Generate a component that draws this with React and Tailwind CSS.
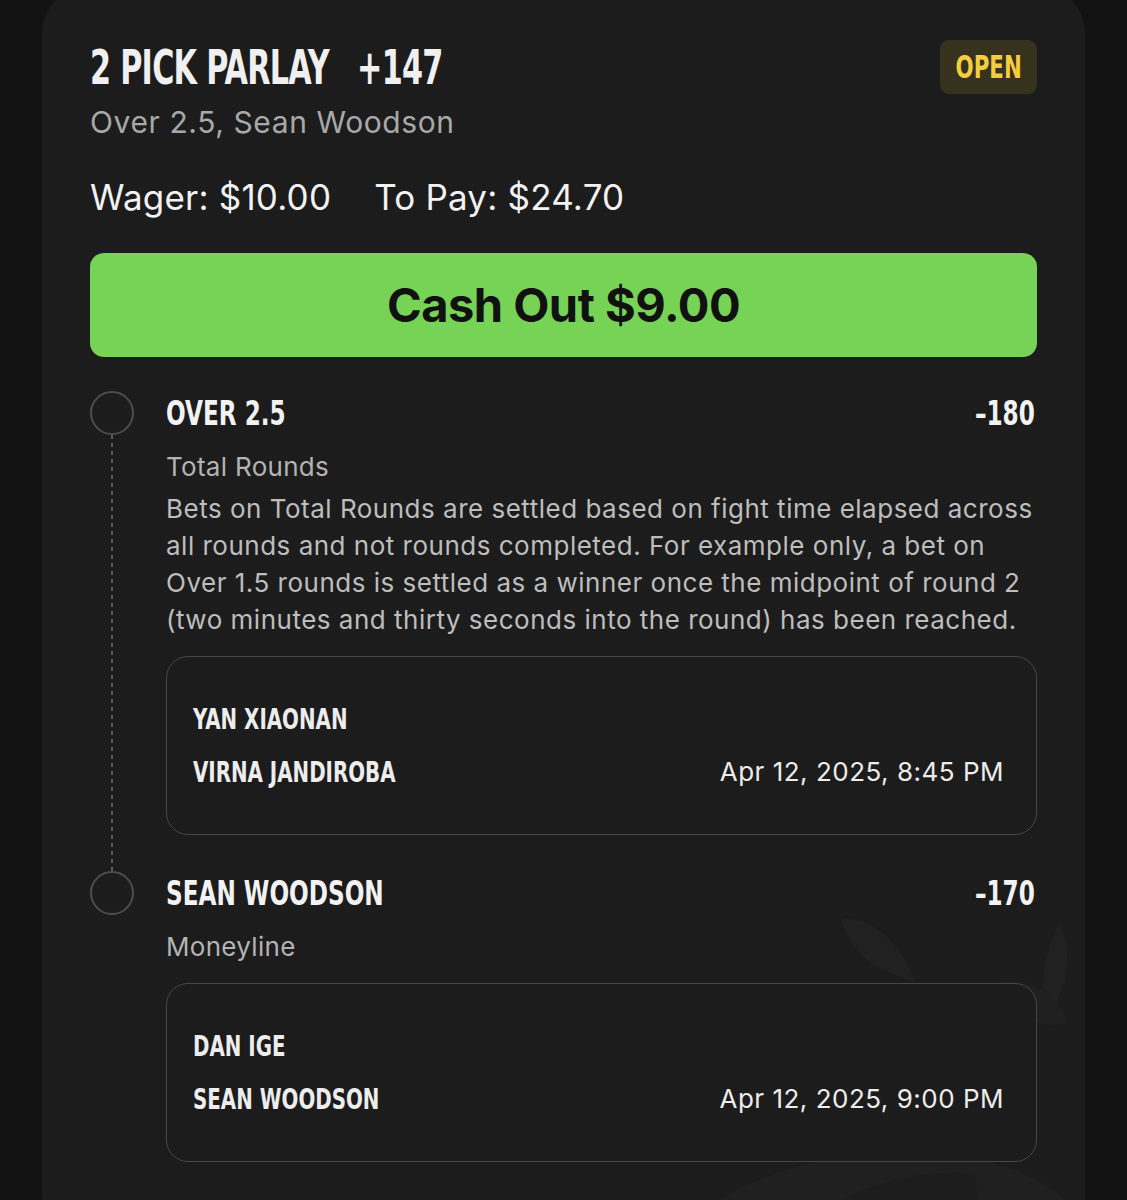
import React from 'react'

const cond = "font-['Liberation_Sans_Narrow','DejaVu_Sans_Condensed',sans-serif] font-bold"
const sans = "font-['Inter','Noto_Sans',sans-serif]"

const legs = [
  {
    pick: 'OVER 2.5',
    odds: '–180',
    market: 'Total Rounds',
    desc: 'Bets on Total Rounds are settled based on fight time elapsed across all rounds and not rounds completed. For example only, a bet on Over 1.5 rounds is settled as a winner once the midpoint of round 2 (two minutes and thirty seconds into the round) has been reached.',
    fighters: ['YAN XIAONAN', 'VIRNA JANDIROBA'],
    date: 'Apr 12, 2025, 8:45 PM',
  },
  {
    pick: 'SEAN WOODSON',
    odds: '–170',
    market: 'Moneyline',
    fighters: ['DAN IGE', 'SEAN WOODSON'],
    date: 'Apr 12, 2025, 9:00 PM',
  },
]

function Watermark() {
  return (
    <svg className="absolute right-0 bottom-0 z-0" width="420" height="330" viewBox="0 0 420 330" fill="none">
      <path d="M176 8 C 200 0, 238 30, 250 70 C 222 60, 190 52, 176 8 Z" fill="#212121" />
      <path d="M395 10 C 380 40, 372 70, 384 100 C 400 80, 410 50, 395 10 Z" fill="#212121" />
      <path d="M335 70 C 360 65, 395 80, 402 110 C 380 120, 350 105, 335 70 Z" fill="#202020" />
      <path d="M0 330 C 80 250, 200 230, 300 245 C 360 255, 400 280, 420 310 L 420 330 Z" fill="#202020" />
      <path d="M120 330 C 170 280, 240 255, 310 262 L 320 330 Z" fill="#1d1d1d" />
    </svg>
  )
}

function Leg({ leg, last }) {
  return (
    <div className="grid grid-cols-[76px_1fr]">
      <div className="flex flex-col items-start">
        <div className="w-[44px] h-[44px] rounded-full border-2 border-[#4d4d4d] shrink-0" />
        {!last && (
          <div className="ml-[21px] w-[2px] flex-1 bg-[repeating-linear-gradient(to_bottom,#5a5a5a_0_4px,transparent_4px_8px)]" />
        )}
      </div>
      <div className={last ? 'pb-[80px]' : 'pb-9'}>
        <div className="h-[44px] flex items-center justify-between">
          <span className={`${cond} inline-block origin-left scale-x-[0.78] text-[33px] leading-none text-[#f2f2f2]`}>{leg.pick}</span>
          <span className={`${cond} inline-block origin-right scale-x-[0.78] text-[33px] leading-none text-[#f2f2f2] mr-[2px]`}>{leg.odds}</span>
        </div>
        <div className={`${sans} mt-[13px] text-[26px] leading-[37px] text-[#b3b3b3] tracking-[0.3px]`}>{leg.market}</div>
        {leg.desc && (
          <p className={`${sans} mt-[5px] text-[26px] leading-[37px] text-[#bdbdbd] tracking-[0.5px]`}>{leg.desc}</p>
        )}
        <div className="mt-[18px] h-[179px] rounded-[22px] border-[1.5px] border-[#474747] bg-[#1c1c1c] pl-[26px] pr-[32px] flex flex-col justify-center gap-[21px]">
          <div>
            <span className={`${cond} inline-block origin-left scale-x-[0.76] text-[29px] leading-[32px] text-[#ededed]`}>{leg.fighters[0]}</span>
          </div>
          <div className="flex items-center justify-between">
            <span className={`${cond} inline-block origin-left scale-x-[0.76] text-[29px] leading-[32px] text-[#ededed]`}>{leg.fighters[1]}</span>
            <span className={`${sans} text-[26px] leading-[32px] text-[#ececec] tracking-[0.5px]`}>{leg.date}</span>
          </div>
        </div>
      </div>
    </div>
  )
}

export default function App() {
  return (
    <div className="h-screen bg-[#121212] pl-[42px] pr-[42px] overflow-hidden">
      <div className="relative -mt-[12px] rounded-[44px] bg-[#1c1c1c] px-[48px] pt-[52px] overflow-hidden">
        <Watermark />
        <div className="relative z-10">
          <div className="flex items-center justify-between h-[54px]">
            <h1 className={`${cond} inline-block origin-left scale-x-[0.7] text-[48px] leading-none text-[#f0f0f0] tracking-[-1px] whitespace-nowrap`}>
              2 PICK PARLAY<span className="ml-[40px]">+147</span>
            </h1>
            <div className="h-[54px] w-[97px] rounded-[9px] bg-[#36321d] flex items-center justify-center">
              <span className={`${cond} inline-block scale-x-[0.74] text-[32px] leading-none text-[#f3cd3d]`}>OPEN</span>
            </div>
          </div>
          <div className={`${sans} mt-[10px] text-[30px] leading-[36px] text-[#a8a8a8] tracking-[0.6px]`}>Over 2.5, Sean Woodson</div>
          <div className={`${sans} mt-[37px] text-[35px] leading-[40px] text-[#f2f2f2] tracking-[0.2px] flex gap-[43px]`}>
            <span>Wager: $10.00</span>
            <span>To Pay: $24.70</span>
          </div>
          <button className={`${sans} mt-[36px] w-full h-[104px] rounded-[14px] bg-[#77d355] text-[47px] font-bold text-[#111] tracking-[-0.5px]`}>
            Cash Out $9.00
          </button>
          <div className="mt-[34px]">
            {legs.map((leg, i) => (
              <Leg key={leg.pick} leg={leg} last={i === legs.length - 1} />
            ))}
          </div>
        </div>
      </div>
    </div>
  )
}
